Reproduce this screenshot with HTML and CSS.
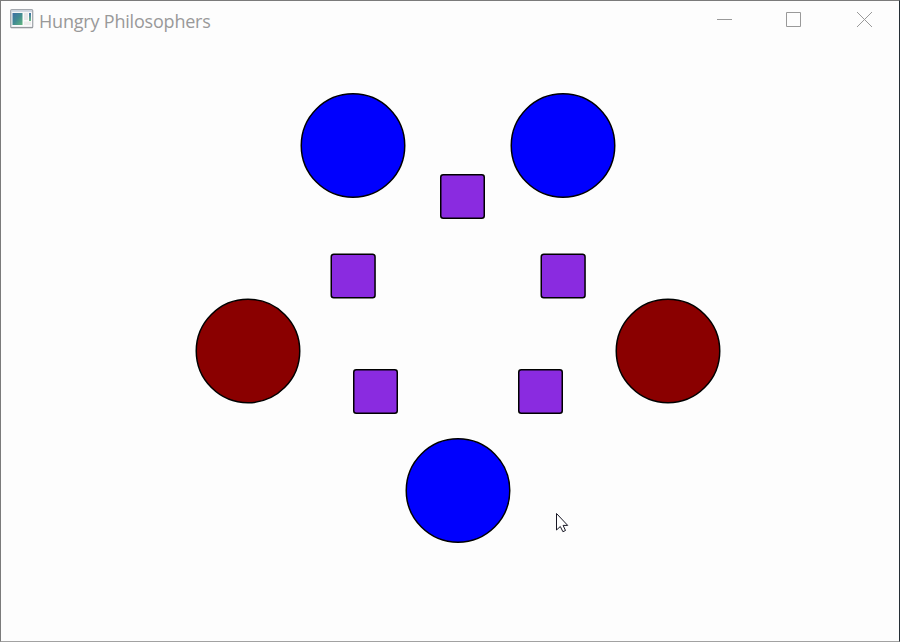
FILE: index.html
```
<!DOCTYPE html>
<html lang="en">
<head>
<meta charset="utf-8">
<title>Hungry Philosophers</title>
<link rel="stylesheet" href="styles.css">
</head>
<body>
<div class="window">
  <header class="titlebar">
    <svg class="app-icon" width="24" height="20" viewBox="0 0 24 20">
      <defs>
        <linearGradient id="pane" x1="0" y1="0" x2="1" y2="1">
          <stop offset="0" stop-color="#3d6fa5"/><stop offset=".5" stop-color="#418b92"/><stop offset="1" stop-color="#62b77f"/>
        </linearGradient>
        <linearGradient id="strip" x1="0" y1="0" x2="0" y2="1">
          <stop offset="0" stop-color="#3f72a8"/><stop offset="1" stop-color="#6cba83"/>
        </linearGradient>
      </defs>
      <rect x=".7" y=".7" width="22" height="18" rx="1" fill="#eef0f3" stroke="#a4a8ae" stroke-width="1.3"/>
      <path d="M1.5 2h20.500" stroke="#c6d0dc" stroke-width="1.500"/>
      <path d="M1 18.600h22" stroke="#94989c"/>
      <rect x="2" y="3.500" width="20" height="13.500" fill="#fbfbfb"/>
      <rect x="2.500" y="4" width="10" height="12" fill="url(#pane)"/>
      <rect x="14" y="4" width="4" height="7" fill="#e5e7e9"/>
      <rect x="14" y="12.500" width="7" height="3.500" fill="#ededed"/>
      <rect x="19" y="4" width="2" height="8" fill="url(#strip)"/>
    </svg>
    <span class="title">Hungry Philosophers</span>
    <div class="controls">
      <svg width="15" height="15" viewBox="0 0 15 15"><path d="M0 7.500h15"/></svg>
      <svg width="15" height="15" viewBox="0 0 15 15"><path d="M.5.5h14v14H.5z"/></svg>
      <svg width="15" height="15" viewBox="0 0 15 15"><path d="M0 0l15 15M15 0L0 15"/></svg>
    </div>
  </header>
  <svg class="table" width="898" height="602" viewBox="1 39 898 602">
    <g class="thinking">
      <circle cx="353" cy="145.500" r="51.750"/>
      <circle cx="563" cy="145.500" r="51.750"/>
      <circle cx="458" cy="490.500" r="51.750"/>
    </g>
    <g class="hungry">
      <circle cx="248" cy="351" r="51.750"/>
      <circle cx="668" cy="351" r="51.750"/>
    </g>
    <g class="fork">
      <rect x="440.750" y="174.750" width="43.500" height="43.500" rx="2.500"/>
      <rect x="331.250" y="254.250" width="43.800" height="43.500" rx="2.500"/>
      <rect x="541.250" y="254.250" width="43.800" height="43.500" rx="2.500"/>
      <rect x="353.750" y="369.750" width="43.500" height="43.500" rx="2.500"/>
      <rect x="518.750" y="369.750" width="43.500" height="43.500" rx="2.500"/>
    </g>
    <path class="cursor" d="M556.500 513.500v16.500l3.800-3.500 2.600 5.200 2.600-1.200-2.400-5.100h4.600z"/>
  </svg>
</div>
</body>
</html>
```
FILE: styles.css
```
* { box-sizing: border-box; }
body { margin: 0; background: #fdfdfd; }
.window {
  width: 900px;
  height: 642px;
  overflow: hidden;
  background: #fdfdfd;
  border: 1px solid #7b7b7b;
  border-right-color: #252e35;
  border-bottom-color: #a2a2a2;
}
.titlebar {
  display: flex;
  height: 38px;
  padding: 8px 27px 0 9px;
}
.app-icon { flex: none; }
.title {
  margin-left: 5px;
  font: 18px/24px "Open Sans", "Noto Sans", sans-serif;
  letter-spacing: -0.2px;
  color: #999;
  white-space: nowrap;
}
.controls {
  display: flex;
  gap: 54.5px;
  margin: 3px 0 0 auto;
}
.controls svg {
  fill: none;
  stroke: #999;
  stroke-width: 1;
}
.controls svg:last-child { margin-left: 1.500px; }
.table { display: block; }
.table circle, .fork rect { stroke: #000; stroke-width: 1.500; }
.thinking { fill: #0000fe; }
.hungry { fill: #8a0000; }
.fork { fill: #8a2be0; }
.cursor { fill: #fff; stroke: #171724; stroke-width: 1; }
```
